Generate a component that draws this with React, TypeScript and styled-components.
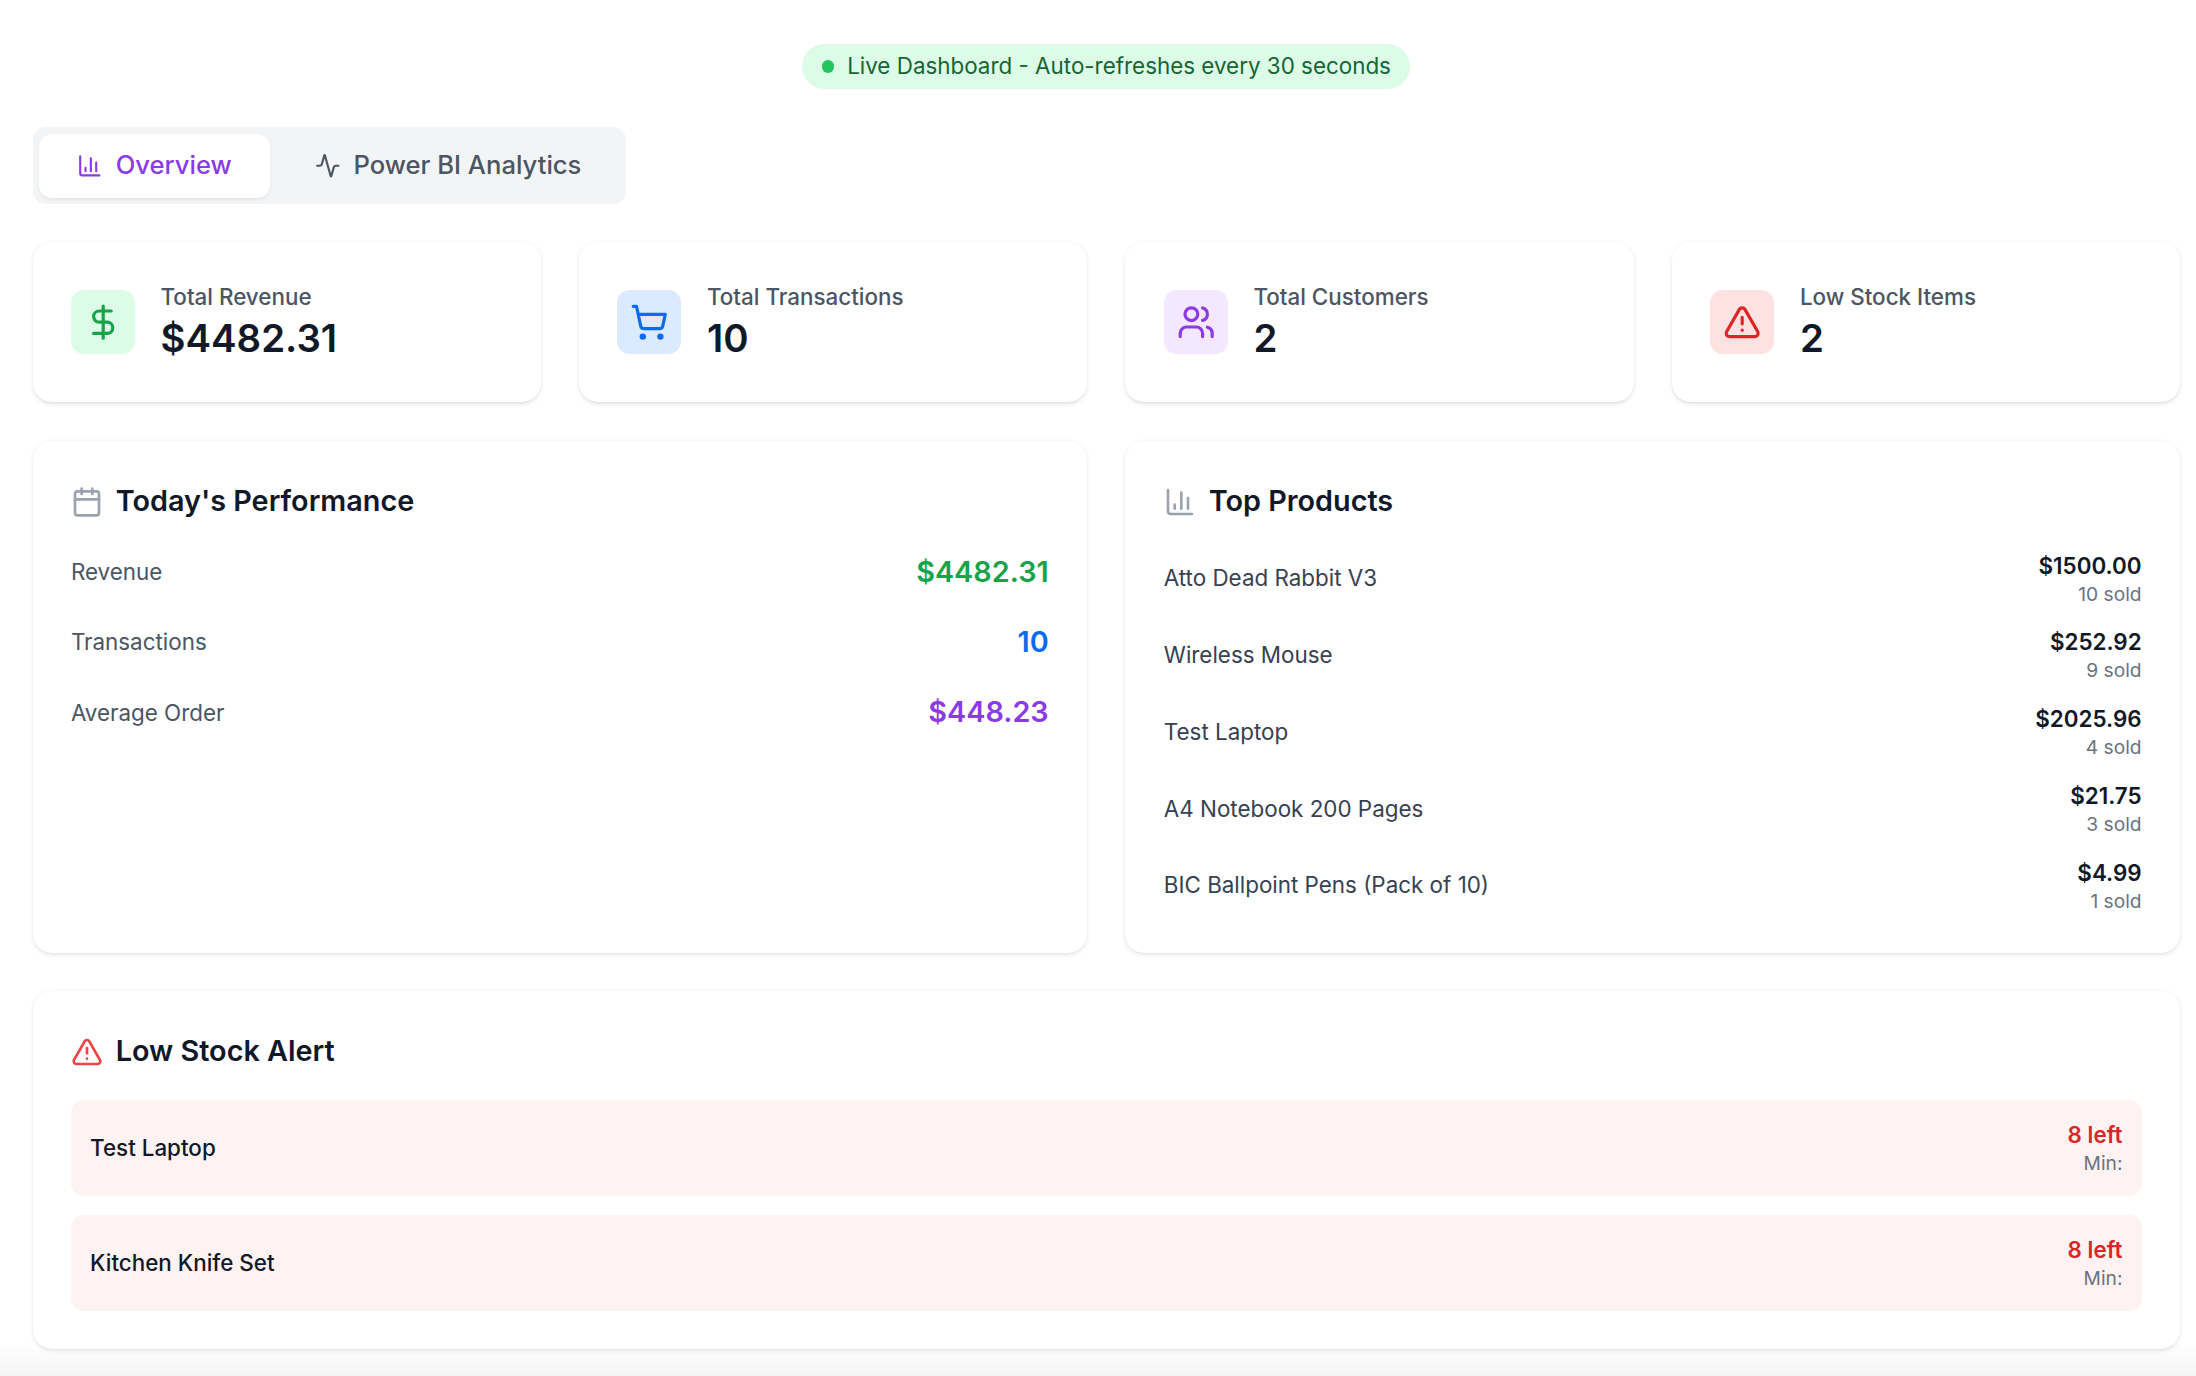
import React from "react";
import styled, { createGlobalStyle } from "styled-components";
import {
  Activity,
  AlertTriangle,
  BarChart3,
  Calendar,
  DollarSign,
  ShoppingCart,
  Users,
} from "lucide-react";

const Global = createGlobalStyle`
  html, body { margin: 0; padding: 0; background: #ffffff; }
  body { font-family: Inter, "Liberation Sans", sans-serif; color: #111827; }
  * { box-sizing: border-box; }
`;

const Page = styled.main`
  display: flex;
  flex-direction: column;
  gap: 38.4px;
  padding: 44px 16px 16px 32.5px;
`;

const BannerRow = styled.div`
  display: flex;
  justify-content: center;
`;

const LivePill = styled.div`
  display: inline-flex;
  align-items: center;
  gap: 12.8px;
  height: 44.8px;
  padding: 0 19.2px;
  border-radius: 999px;
  background: #dcfce7;
  color: #166534;
  font-size: 22.4px;
  line-height: 32px;
`;

const LiveDot = styled.span`
  width: 12.8px;
  height: 12.8px;
  border-radius: 50%;
  background: #22c55e;
`;

const TabBar = styled.nav`
  display: flex;
  gap: 6.4px;
  align-self: flex-start;
  padding: 6.4px;
  border-radius: 12.8px;
  background: #f3f4f6;
`;

const Tab = styled.div<{ $active?: boolean }>`
  display: flex;
  align-items: center;
  gap: 12.8px;
  padding: 12.8px 38.4px;
  border-radius: 12.8px;
  font-size: 25.6px;
  line-height: 38.4px;
  font-weight: 500;
  color: ${(p) => (p.$active ? "#8b3ae8" : "#4b5563")};
  background: ${(p) => (p.$active ? "#ffffff" : "transparent")};
  box-shadow: ${(p) => (p.$active ? "0 1.6px 3.2px rgba(0,0,0,0.06)" : "none")};
`;

const StatGrid = styled.section`
  display: grid;
  grid-template-columns: repeat(4, 1fr);
  gap: 38.4px;
`;

const TwoColumns = styled.section`
  display: grid;
  grid-template-columns: repeat(2, 1fr);
  gap: 38.4px;
`;

const Card = styled.div`
  padding: 38.4px;
  border-radius: 19.2px;
  background: #ffffff;
  box-shadow: 0 1.6px 4.8px rgba(0, 0, 0, 0.08), 0 1.6px 3.2px -1.6px rgba(0, 0, 0, 0.08);
`;

const StatCard = styled(Card)`
  display: flex;
  align-items: center;
  gap: 25.6px;
`;

const StatIcon = styled.div<{ $bg: string; $fg: string }>`
  display: flex;
  align-items: center;
  justify-content: center;
  flex: none;
  width: 64px;
  height: 64px;
  border-radius: 12.8px;
  background: ${(p) => p.$bg};
  color: ${(p) => p.$fg};
`;

const StatText = styled.div`
  display: flex;
  flex-direction: column;
`;

const StatLabel = styled.div`
  font-size: 22.4px;
  line-height: 32px;
  font-weight: 500;
  color: #4b5563;
`;

const StatValue = styled.div`
  font-size: 38.4px;
  line-height: 51.2px;
  font-weight: 600;
  color: #111827;
`;

const CardTitle = styled.h2`
  display: flex;
  align-items: center;
  gap: 12.8px;
  margin: 0 0 25.6px;
  font-size: 28.8px;
  line-height: 44.8px;
  font-weight: 600;
  color: #111827;
`;

const TitleIcon = styled.span<{ $fg: string }>`
  display: flex;
  color: ${(p) => p.$fg};
`;

const MetricList = styled.div`
  display: flex;
  flex-direction: column;
  gap: 25.6px;
`;

const Row = styled.div`
  display: flex;
  align-items: center;
  justify-content: space-between;
`;

const MetricLabel = styled.span`
  font-size: 22.4px;
  line-height: 32px;
  color: #4b5563;
`;

const MetricValue = styled.span<{ $fg: string }>`
  font-size: 28.8px;
  line-height: 44.8px;
  font-weight: 600;
  color: ${(p) => p.$fg};
`;

const ProductList = styled.div`
  display: flex;
  flex-direction: column;
  gap: 19.2px;
`;

const ProductName = styled.span`
  font-size: 22.4px;
  line-height: 32px;
  color: #374151;
`;

const RightStack = styled.div`
  display: flex;
  flex-direction: column;
  align-items: flex-end;
`;

const ProductPrice = styled.span`
  font-size: 22.4px;
  line-height: 32px;
  font-weight: 600;
  color: #111827;
`;

const Small = styled.span`
  font-size: 19.2px;
  line-height: 25.6px;
  color: #6b7280;
`;

const AlertList = styled.div`
  display: flex;
  flex-direction: column;
  gap: 19.2px;
`;

const AlertRow = styled(Row)`
  padding: 19.2px;
  border-radius: 12.8px;
  background: #fef2f2;
`;

const AlertName = styled.span`
  font-size: 22.4px;
  line-height: 32px;
  font-weight: 500;
  color: #111827;
`;

const AlertCount = styled.span`
  font-size: 22.4px;
  line-height: 32px;
  font-weight: 600;
  color: #dc2626;
`;

const BottomFade = styled.div`
  position: fixed;
  left: 0;
  right: 0;
  bottom: 0;
  height: 34px;
  pointer-events: none;
  background: linear-gradient(to bottom, rgba(0, 0, 0, 0), rgba(0, 0, 0, 0.04));
`;

const stats = [
  { label: "Total Revenue", value: "$4482.31", bg: "#dcfce7", fg: "#16a34a", Icon: DollarSign },
  { label: "Total Transactions", value: "10", bg: "#dbeafe", fg: "#0b6bf0", Icon: ShoppingCart },
  { label: "Total Customers", value: "2", bg: "#f3e8ff", fg: "#8b3ae8", Icon: Users },
  { label: "Low Stock Items", value: "2", bg: "#fee2e2", fg: "#dc2626", Icon: AlertTriangle },
];

const metrics = [
  { label: "Revenue", value: "$4482.31", fg: "#16a34a" },
  { label: "Transactions", value: "10", fg: "#0b6bf0" },
  { label: "Average Order", value: "$448.23", fg: "#8b3ae8" },
];

const products = [
  { name: "Atto Dead Rabbit V3", price: "$1500.00", sold: "10 sold" },
  { name: "Wireless Mouse", price: "$252.92", sold: "9 sold" },
  { name: "Test Laptop", price: "$2025.96", sold: "4 sold" },
  { name: "A4 Notebook 200 Pages", price: "$21.75", sold: "3 sold" },
  { name: "BIC Ballpoint Pens (Pack of 10)", price: "$4.99", sold: "1 sold" },
];

const alerts = ["Test Laptop", "Kitchen Knife Set"];

export default function App() {
  return (
    <Page>
      <Global />
      <BannerRow>
        <LivePill>
          <LiveDot />
          Live Dashboard - Auto-refreshes every 30 seconds
        </LivePill>
      </BannerRow>

      <TabBar>
        <Tab $active>
          <BarChart3 size={25.6} />
          Overview
        </Tab>
        <Tab>
          <Activity size={25.6} />
          Power BI Analytics
        </Tab>
      </TabBar>

      <StatGrid>
        {stats.map(({ label, value, bg, fg, Icon }) => (
          <StatCard key={label}>
            <StatIcon $bg={bg} $fg={fg}>
              <Icon size={38.4} />
            </StatIcon>
            <StatText>
              <StatLabel>{label}</StatLabel>
              <StatValue>{value}</StatValue>
            </StatText>
          </StatCard>
        ))}
      </StatGrid>

      <TwoColumns>
        <Card>
          <CardTitle>
            <TitleIcon $fg="#9ca3af">
              <Calendar size={32} />
            </TitleIcon>
            Today's Performance
          </CardTitle>
          <MetricList>
            {metrics.map((m) => (
              <Row key={m.label}>
                <MetricLabel>{m.label}</MetricLabel>
                <MetricValue $fg={m.fg}>{m.value}</MetricValue>
              </Row>
            ))}
          </MetricList>
        </Card>
        <Card>
          <CardTitle>
            <TitleIcon $fg="#9ca3af">
              <BarChart3 size={32} />
            </TitleIcon>
            Top Products
          </CardTitle>
          <ProductList>
            {products.map((p) => (
              <Row key={p.name}>
                <ProductName>{p.name}</ProductName>
                <RightStack>
                  <ProductPrice>{p.price}</ProductPrice>
                  <Small>{p.sold}</Small>
                </RightStack>
              </Row>
            ))}
          </ProductList>
        </Card>
      </TwoColumns>

      <Card>
        <CardTitle>
          <TitleIcon $fg="#ef4444">
            <AlertTriangle size={32} />
          </TitleIcon>
          Low Stock Alert
        </CardTitle>
        <AlertList>
          {alerts.map((name) => (
            <AlertRow key={name}>
              <AlertName>{name}</AlertName>
              <RightStack>
                <AlertCount>8 left</AlertCount>
                <Small>Min:</Small>
              </RightStack>
            </AlertRow>
          ))}
        </AlertList>
      </Card>
      <BottomFade />
    </Page>
  );
}
